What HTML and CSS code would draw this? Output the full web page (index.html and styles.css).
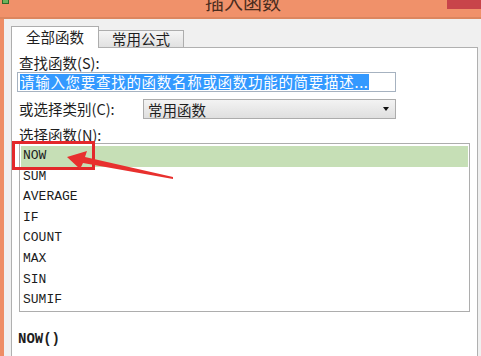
FILE: index.html
```html
<!DOCTYPE html>
<html lang="zh-CN">
<head>
<meta charset="utf-8">
<title>插入函数</title>
<link rel="stylesheet" href="styles.css">
</head>
<body>
<div class="window">
  <div class="titlebar">
    <span class="app-icon"></span>
    <span class="title">插入函数</span>
    <span class="close"></span>
  </div>
  <div class="client">
    <div class="tabs">
      <div class="tab active">全部函数</div>
      <div class="tab">常用公式</div>
    </div>
    <div class="panel">
      <div class="label">查找函数(S):</div>
      <div class="search"><span class="sel">请输入您要查找的函数名称或函数功能的简要描述...</span></div>
      <div class="cat-row">
        <span class="label cat-label">或选择类别(C):</span>
        <div class="select"><span class="select-text">常用函数</span><span class="caret"></span></div>
      </div>
      <div class="label fn-label">选择函数(N):</div>
      <ul class="fnlist">
        <li class="selected">NOW</li>
        <li>SUM</li>
        <li>AVERAGE</li>
        <li>IF</li>
        <li>COUNT</li>
        <li>MAX</li>
        <li>SIN</li>
        <li>SUMIF</li>
      </ul>
      <div class="signature">NOW()</div>
    </div>
  </div>
</div>
<svg class="annot" width="481" height="356" viewBox="0 0 481 356">
  <rect x="13.5" y="142.5" width="80" height="26" fill="none" stroke="#e3282b" stroke-width="3"/>
  <polygon points="67,157 87,151 85,157 173,177 173,179 83,163 80,169" fill="#e8302e"/>
</svg>
</body>
</html>
```
FILE: styles.css
```css
html, body {
  margin: 0;
  padding: 0;
}
body {
  width: 481px;
  height: 356px;
  overflow: hidden;
  position: relative;
  background: #f0f0f0;
  font-family: "Noto Sans CJK SC", "Noto Sans", sans-serif;
  color: #1e1e1e;
}
.window {
  display: flex;
  flex-direction: column;
  height: 356px;
}
.titlebar {
  flex: none;
  height: 17px;
  border-bottom: 2px solid #dc865f;
  background: #f0916a;
  display: flex;
  align-items: flex-start;
  overflow: hidden;
}
.app-icon {
  width: 5px;
  height: 3px;
  margin-left: 2px;
  border: 1px solid #2f6a2a;
  border-top: 0;
  background: #6cb35a;
}
.title {
  margin-left: 196px;
  margin-top: -8px;
  font-size: 19px;
  line-height: 19px;
  color: #4a2c1e;
}
.close {
  margin-left: auto;
  width: 34px;
  height: 9px;
  background: #c8444a;
}
.client {
  flex: 1;
  min-height: 0;
  border-left: 4px solid #ee8d65;
  padding: 8px 3px 0 7px;
  display: flex;
  flex-direction: column;
}
.tabs {
  display: flex;
  align-items: flex-end;
  height: 20px;
  position: relative;
  z-index: 1;
}
.tab {
  height: 16px;
  border: 1px solid #adadad;
  border-bottom: 0;
  margin-left: -1px;
  padding: 0 13px;
  font-size: 14.5px;
  line-height: 16px;
  background: linear-gradient(#f5f5f5, #e1e1e1);
}
.tab.active {
  margin-left: 0;
  height: 21px;
  margin-bottom: -1px;
  line-height: 20px;
  padding: 0 14px;
  background: #fff;
}
.panel {
  flex: 1;
  background: #fff;
  border: 1px solid #b0b0b0;
  border-bottom: 0;
  padding: 6px 0 0 7px;
  display: flex;
  flex-direction: column;
  align-items: flex-start;
}
.label {
  font-size: 14.5px;
  line-height: 18px;
}
.search {
  margin-left: -2px;
  width: 375px;
  height: 18px;
  border: 1px solid #a6b2c0;
  padding-left: 2px;
  display: flex;
  align-items: center;
  overflow: hidden;
}
.sel {
  background: #3399ff;
  color: #fff;
  font-size: 14.5px;
  line-height: 16px;
  letter-spacing: 0.7px;
  white-space: nowrap;
}
.cat-row {
  margin-top: 7px;
  display: flex;
  align-items: center;
}
.cat-label {
  flex: 0 0 124px;
}
.select {
  box-sizing: border-box;
  width: 253px;
  height: 20px;
  border: 1px solid #acacac;
  background: linear-gradient(#f3f3f3, #dfdfdf);
  display: flex;
  align-items: center;
  justify-content: space-between;
  padding: 0 6px 0 4px;
  font-size: 14.5px;
}
.caret {
  width: 0;
  height: 0;
  border-left: 3.5px solid transparent;
  border-right: 3.5px solid transparent;
  border-top: 4px solid #111;
}
.fn-label {
  margin-top: 8px;
  line-height: 16px;
}
.fnlist {
  box-sizing: border-box;
  list-style: none;
  margin: 0;
  width: 451px;
  height: 169px;
  border: 1px solid #adadad;
  padding: 2px 1px 0 1px;
  font-family: "Liberation Mono", "DejaVu Sans Mono", monospace;
  font-size: 13px;
  color: #1c1c1c;
}
.fnlist li {
  height: 20.6px;
  line-height: 20.6px;
  padding-left: 2px;
}
.fnlist li.selected {
  background: #c6dfb6;
}
.signature {
  margin-top: 18px;
  margin-left: -1px;
  font-family: "Liberation Mono", "DejaVu Sans Mono", monospace;
  font-weight: bold;
  font-size: 14px;
  line-height: 18px;
}
.annot {
  position: absolute;
  top: 0;
  left: 0;
  pointer-events: none;
}
```
